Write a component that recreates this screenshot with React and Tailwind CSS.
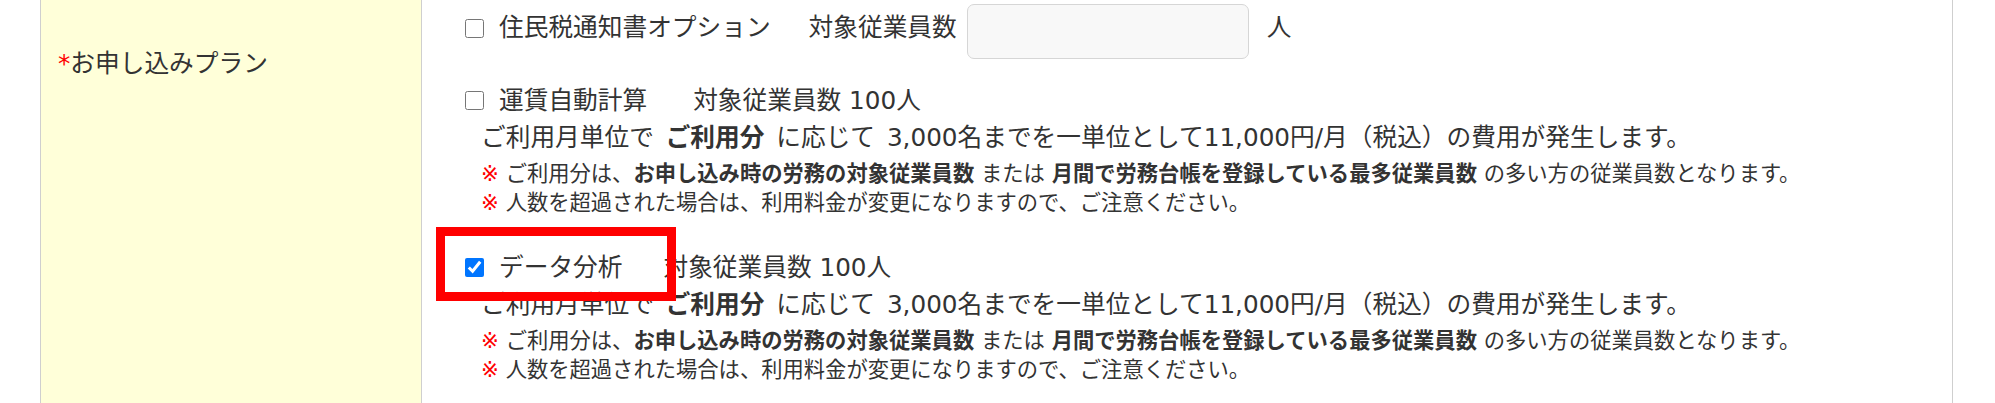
const FONT = { fontFamily: '"DejaVu Sans", "Noto Sans CJK JP", "Noto Sans", sans-serif' };

const Notes = () => (
    <div className="text-[21.3px] leading-[29px] text-[#333]">
        <div className="mt-[3px]">
            <span className="text-[#ff0000]">※</span> ご利用分は、<b>お申し込み時の労務の対象従業員数</b> または <b>月間で労務台帳を登録している最多従業員数</b> の多い方の従業員数となります。
        </div>
        <div>
            <span className="text-[#ff0000]">※</span> 人数を超過された場合は、利用料金が変更になりますので、ご注意ください。
        </div>
    </div>
);

const PlanItem = ({ name, gap, checked }) => (
    <div>
        <div className="flex items-center leading-[37px]">
            <input type="checkbox" defaultChecked={checked} className="w-[19px] h-[19px] shrink-0" />
            <span className="ml-[15px]">{name}</span>
            <span className={gap}>対象従業員数 100人</span>
        </div>
        <div className="pl-[16px]">
            <div className="leading-[37px] [word-spacing:4px]">
                ご利用月単位で <b>ご利用分</b> に応じて 3,000名までを一単位として11,000円/月（税込）の費用が発生します。
            </div>
            <Notes />
        </div>
    </div>
);

export default function App() {
    return (
        <div className="w-[1995px] h-[403px] bg-white overflow-hidden text-[#333]" style={FONT}>
            <div className="flex h-full ml-[40px] w-[1913px] border-x border-[#cfcfcf]">
                {/* Label column */}
                <div className="w-[381px] shrink-0 bg-[#ffffd9] border-r border-[#cfcfcf] pl-[17px] pt-[45px]">
                    <div className="text-[24.7px] leading-[37px]">
                        <span className="text-[#ff0000]">*</span>お申し込みプラン
                    </div>
                </div>

                {/* Options column */}
                <div className="relative flex-1 pl-[43px] pt-[4px] text-[24.7px]">
                    <div className="flex items-start">
                        <div className="flex items-center h-[48px]">
                            <input type="checkbox" className="w-[19px] h-[19px] shrink-0" />
                            <span className="ml-[15px]">住民税通知書オプション</span>
                            <span className="ml-[38px]">対象従業員数</span>
                        </div>
                        <input
                            type="text"
                            className="ml-[10px] w-[282px] h-[55px] bg-[#f8f8f8] border border-[#d6d6d6] rounded-[7px]"
                        />
                        <span className="ml-[18px] leading-[48px]">人</span>
                    </div>

                    <div className="mt-[23px]">
                        <PlanItem name="運賃自動計算" gap="ml-[46px]" />
                    </div>

                    <div className="mt-[32px]">
                        <PlanItem name="データ分析" gap="ml-[41px]" checked />
                    </div>

                    {/* highlight */}
                    <div className="absolute left-[14px] top-[227px] w-[240px] h-[74px] border-[9px] border-[#ff0000]" />
                </div>
            </div>
        </div>
    );
}
